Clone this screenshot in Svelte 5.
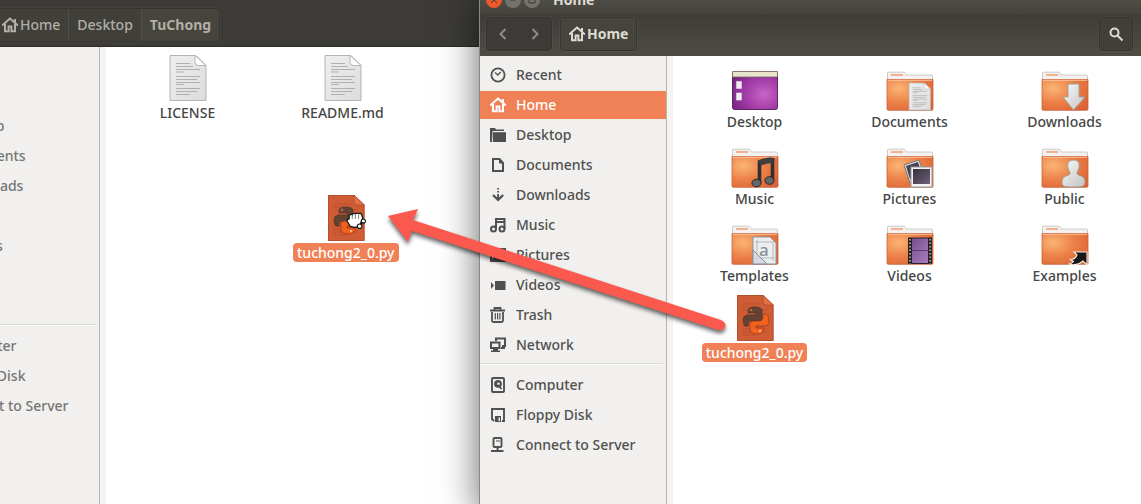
<script>
  const glyphs = {
    recent: '<circle cx="8" cy="8" r="6.6" fill="none" stroke="currentColor" stroke-width="1.8"/><path d="M5 5.5 7.8 8l3-3" fill="none" stroke="currentColor" stroke-width="1.3"/>',
    home: '<path d="M0 8.6 8 1.6l8 7M3 7v7.2h3.6V9.6h2.8v4.6H13V7" fill="none" stroke="currentColor" stroke-width="2"/><path d="M12 2h2v4h-2z" fill="currentColor"/>',
    desktop: '<path d="M0 1h5l1 1.5h8V4H2.6L2 15H0z" fill="currentColor"/><path d="M3 5.2h13V15H3z" fill="currentColor"/>',
    documents: '<path d="M3 2h6.5L13 5.8V14H3z" fill="none" stroke="currentColor" stroke-width="2"/><path d="M9 2v4.5h4" fill="currentColor"/>',
    downloads: '<path d="M7.2 1H9v1.6H7.2zM7.2 4H9v1.6H7.2zM7.2 7H9v6H7.2z" fill="currentColor"/><path d="m3 8 5.1 4.8L13.2 8" fill="none" stroke="currentColor" stroke-width="2.3"/>',
    music: '<path d="M6 12V2h8.500v10M6 5h8" fill="none" stroke="currentColor" stroke-width="2"/><circle cx="3.5" cy="12" r="2.5" fill="none" stroke="currentColor" stroke-width="2"/><circle cx="12" cy="12" r="2.5" fill="none" stroke="currentColor" stroke-width="2"/>',
    pictures: '<path d="M1 2h14v12H1z" fill="none" stroke="currentColor" stroke-width="2"/><path d="m2 12 4-5 3 3 2-2 3 4v2H2z" fill="currentColor"/>',
    videos: '<path d="M5 4h10.500v9H5zM1 5l3 3.500L1 12z" fill="currentColor"/>',
    trash: '<path d="M0 3.500h15M4.500 3V1h6v2M2 5v8.500q0 1.500 1.500 1.500h8q1.500 0 1.500-1.500V5" fill="none" stroke="currentColor" stroke-width="1.8"/><path d="M5.300 6v6.500M7.600 6v6.500M9.900 6v6.500" stroke="currentColor" stroke-width="1.2"/>',
    network: '<path d="M6 4V1.500h9V9h-3M1 5.500h8.500V11H1z" fill="none" stroke="currentColor" stroke-width="2"/><path d="M3 12h5v1.500h2V15H1v-1.500h2zM11 10h4v2h-4z" fill="currentColor"/>',
    computer: '<rect x="2" y="1" width="12" height="14" rx="1" fill="none" stroke="currentColor" stroke-width="1.9"/><circle cx="8" cy="6.8" r="3.9" fill="currentColor"/><circle cx="8.5" cy="6.8" r="1.3" fill="#f1f0ee"/><path d="m8 8 3.500 4" stroke="currentColor" stroke-width="1.8"/>',
    floppy: '<path d="M4 14 2 12V2h12v12h-2" fill="none" stroke="currentColor" stroke-width="1.9"/><path d="M5 9h6v6H5z" fill="currentColor"/><path d="M8.500 10.500H10V14H8.500z" fill="#f1f0ee"/>',
    server: '<rect x="3.5" y="1" width="8" height="9" rx="1" fill="none" stroke="currentColor" stroke-width="1.9"/><path d="M6 4h4" stroke="currentColor"/><path d="M6.600 10h2v3h4.900v2H1v-2h5.600z" fill="currentColor"/>'
  };

  const page = (x, y, s) =>
    `<g transform="translate(${x} ${y}) scale(${s})"><path d="M0 0h26l10 10v35H0z" fill="url(#paper)" stroke="#b4b4b4"/><path d="M25 0v7q0 3 3 3h8z" fill="#fff" stroke="#b4b4b4"/><path d="M6 8h14M6 11h17M6 14h24M6 16.500h8M6 21h24M6 24h21M6 27h24M6 29h8M6 33h24M6 36h21M6 39h14" stroke="#b0b0b0" stroke-width="1.2"/></g>`;

  const folder = '<path d="M1.500 17V9q0-.8.800-.8h15.700q1 0 1.300 1l.7 1.800h25.500q1 0 1 1V17z" fill="#f4f2f0" stroke="#c4beb9" stroke-width=".8"/><path d="M5 11h12" stroke="#f09a70" stroke-width="1.5"/><path d="M1 15.500h46V45q0 1.300-1.300 1.300H2.300Q1 46.300 1 45z" fill="url(#orange)" stroke="#c8623a" stroke-width=".8"/><path d="M1.800 16.300h44.400" stroke="#fac39d"/>';

  const art = {
    page: page(6, 0.5, 1),
    desktop: '<rect x="1.5" y="8" width="45" height="37.5" rx="2" fill="url(#purple)" stroke="#63246b"/><path d="M1.500 7.500h45v5.500h-45z" fill="#e9e4cc" stroke="#77655d" stroke-width=".8"/><path d="M5 17h6v8H5zM5 28.500h6v8H5z" fill="#f4eaf5" stroke="#8d5092" stroke-width=".6"/>',
    documents: folder + page(23, 19, 0.6),
    downloads: folder + '<path d="M27 20h11v13h6L32.500 46 22 33h5z" fill="url(#silver)" stroke="#a4a19e"/>',
    music: folder + '<path d="M28.500 42V21q8-3.500 13-2.500v20" fill="none" stroke="#303030" stroke-width="3.6"/><path d="M28.500 22.500q8-3.500 13-2.500" fill="none" stroke="#404040" stroke-width="5"/><ellipse cx="25.5" cy="42" rx="4.6" ry="3.8" fill="#64676a" stroke="#242424"/><ellipse cx="38.500" cy="39.500" rx="4.600" ry="3.800" fill="#64676a" stroke="#242424"/>',
    pictures: folder + '<path d="m18 24 15-5 6 17-15 6z" fill="#ddd" stroke="#777"/><path d="m20 25 12-4 4 13-12 4z" fill="#494250"/><rect x="25" y="26" width="21" height="20" fill="#f3f3f3" stroke="#999"/><rect x="27" y="28" width="17" height="15" fill="url(#photo)"/>',
    public: folder + '<path d="M32.500 19c5 0 6.500 3.500 5.500 8-.5 2.500-2 3.500-2 6 2 2 8 1.500 8 8 0 4-2 5-12 5s-11-1-11-5c0-6.500 6-6 8-8 0-2.500-1.500-3.500-2-6-1-4.500.5-8 5.500-8z" fill="url(#silver)" stroke="#9f9b98"/>',
    templates: folder + '<path d="M22 19h17l6 6v21H22z" fill="#eceef0" stroke="#8f9399"/><path d="M26 22v21M24 24h20M42 24v19M23 40h21" stroke="#b5b8bd"/><text x="28" y="38" font-family="Noto Sans, sans-serif" font-size="17" fill="#8b8f98">a</text><path d="M22 32v14h14z" fill="#d4d6df" fill-opacity=".8" stroke="#888e9c"/>',
    videos: folder + '<path d="M22 19.500h24V46H22z" fill="#272126"/><path d="M26 20.500h16V45H26z" fill="url(#film)"/><path d="M26 32.500h16" stroke="#5d3a72"/><path d="M24 21v25M44.200 21v25" stroke="#b5a6a6" stroke-width="1.8" stroke-dasharray="1.5 2"/>',
    examples: folder + '<path d="M33 34h13v13l-4-4c-4 3.500-9 4.500-14.500 3 3-.5 4-1 5-2.500l-3-2c3 0 5.500-1.500 6.500-4.500z" fill="#171717" stroke="#f1e9e2" stroke-width="1.1"/>',
    python: '<path d="M6 0h26l10.500 10v36H6z" fill="#d05c35"/><path d="M32 0v7q0 3 3 3h7.500z" fill="#e07145" stroke="#a34a2a" stroke-width=".7"/><path d="M6.500.5h25M6.500.5v45h35.500v-35" fill="none" stroke="#b4502e"/><path d="M11 9h18M11 12h16M11 15h25M11 31h25M11 34h22M11 37h25M11 40h15" stroke="#b4502e" stroke-width=".8"/><path d="M17 31h-3q-2-2-2-6t4-5h9v-2h-8v-3q1-3 7-3t7 3v8q0 3-4 3h-7q-3 0-3 5z" fill="#634232" stroke="#4a3428" stroke-width=".7"/><path d="M32 19h3q3 2 3 7t-4 5h-9v2h8v2q-1 4-7 4t-7-4v-6q0-3 4-3h6q3 0 3-4z" fill="#f2621f" stroke="#983514" stroke-width=".7"/><circle cx="20" cy="15" r="1.2" fill="#c5663f"/><circle cx="29" cy="36" r="1.2" fill="#ffb083"/>'
  };

  const devices = [['computer', 'Computer'], ['floppy', 'Floppy Disk'], ['server', 'Connect to Server']];

  const project = {
    name: 'back', title: '', path: ['Home', 'Desktop', 'TuChong'], active: '',
    places: [
      ['recent', ''], ['home', ''], ['desktop', 'Desktop'],
      ['documents', 'Documents'], ['downloads', 'Downloads'], ['music', ''],
      ['pictures', 'Pictures'], ['videos', ''], ['trash', '']
    ],
    files: [['page', 'LICENSE'], ['page', 'README.md']]
  };
  const home = {
    name: 'front', title: 'Home', path: ['Home'], active: 'home',
    places: [
      ['recent', 'Recent'], ['home', 'Home'], ['desktop', 'Desktop'],
      ['documents', 'Documents'], ['downloads', 'Downloads'], ['music', 'Music'],
      ['pictures', 'Pictures'], ['videos', 'Videos'], ['trash', 'Trash'], ['network', 'Network']
    ],
    files: [
      ['desktop', 'Desktop'], ['documents', 'Documents'], ['downloads', 'Downloads'],
      ['music', 'Music'], ['pictures', 'Pictures'], ['public', 'Public'],
      ['templates', 'Templates'], ['videos', 'Videos'], ['examples', 'Examples'],
      ['python', 'tuchong2_0.py']
    ]
  };
</script>

{#snippet glyph(name)}
  <svg class="glyph" viewBox="0 0 16 16" aria-hidden="true">{@html glyphs[name]}</svg>
{/snippet}

{#snippet file(kind, label)}
  <button class="file" class:selected={kind === 'python'}>
    <svg class="art" viewBox="0 0 48 48" aria-hidden="true">{@html art[kind]}</svg>
    <span>{label}</span>
  </button>
{/snippet}

{#snippet placeList(items, active)}
  <ul>
    {#each items as [icon, label]}
      <li><a href="#{icon}" class:current={icon === active}>{@render glyph(icon)}<span>{label}</span></a></li>
    {/each}
  </ul>
{/snippet}

{#snippet fileWindow(win)}
  <section class="window {win.name}">
    <header class="titlebar">
      <button class="dot close" aria-label="Close"><svg viewBox="0 0 16 16"><path d="m5 5 6 6m0-6-6 6" /></svg></button>
      <button class="dot" aria-label="Minimize"><svg viewBox="0 0 16 16"><path d="M5 8h6" /></svg></button>
      <button class="dot" aria-label="Maximize"><svg viewBox="0 0 16 16"><path d="M5 5h6v6H5z" /></svg></button>
      {#if win.title}<h1>{win.title}</h1>{/if}
    </header>
    <div class="toolbar">
      <div class="group history">
        <button aria-label="Back"><svg class="glyph" viewBox="0 0 16 16"><path d="M10.500 3 5.500 8l5 5" /></svg></button>
        <button aria-label="Forward"><svg class="glyph" viewBox="0 0 16 16"><path d="m5.500 3 5 5-5 5" /></svg></button>
      </div>
      <nav class="group path" aria-label="Path">
        {#each win.path as part, i}
          <button class:here={i === win.path.length - 1}>
            {#if part === 'Home'}{@render glyph('home')}{/if}<span>{part}</span>
          </button>
        {/each}
      </nav>
      <div class="group search">
        <button aria-label="Search"><svg class="glyph" viewBox="0 0 16 16"><circle cx="6.5" cy="6.5" r="4" /><path d="m9.500 9.500 5 5" /></svg></button>
      </div>
    </div>
    <div class="body">
      <aside>
        {@render placeList(win.places, win.active)}
        <hr />
        {@render placeList(devices, win.active)}
      </aside>
      <main>
        {#each win.files as [kind, label]}
          {@render file(kind, label)}
        {/each}
      </main>
    </div>
  </section>
{/snippet}

<div class="screen">
  <svg class="defs" aria-hidden="true">
    <defs>
      <linearGradient id="paper" x1="0" y1="0" x2="1" y2="1"><stop offset="0" stop-color="#efefef" /><stop offset="1" stop-color="#dcdcdc" /></linearGradient>
      <radialGradient id="orange" cx=".25" cy=".3" r=".9"><stop offset="0" stop-color="#fbb475" /><stop offset=".5" stop-color="#ec8148" /><stop offset="1" stop-color="#db6234" /></radialGradient>
      <radialGradient id="purple" cx=".7" cy=".6" r=".8"><stop offset="0" stop-color="#c964c6" /><stop offset=".6" stop-color="#9c36a2" /><stop offset="1" stop-color="#74247e" /></radialGradient>
      <linearGradient id="silver" x1="0" y1="0" x2="1" y2="1"><stop offset="0" stop-color="#fafafa" /><stop offset="1" stop-color="#c4c2c1" /></linearGradient>
      <linearGradient id="photo" x1="0" y1="0" x2="1" y2="1"><stop offset="0" stop-color="#36333e" /><stop offset="1" stop-color="#6d5f76" /></linearGradient>
      <linearGradient id="film" x1="0" y1="0" x2="1" y2="1"><stop offset="0" stop-color="#74508f" /><stop offset="1" stop-color="#aa7dbd" /></linearGradient>
    </defs>
  </svg>

  {@render fileWindow(project)}

  <div class="dragged">
    {@render file('python', 'tuchong2_0.py')}
    <svg class="hand" viewBox="0 0 20 18" aria-hidden="true">
      <path d="M4 14 1 9q0-2 2-2V4q1-2 3-1 1-2 3-1 2-1 3 0 2-1 3 1l1 4-3 6q-2 2-5 2z" fill="#fff" stroke="#111" stroke-width="1.2" />
      <path d="M6 3v4M9 2v5M12 3v4" stroke="#555" stroke-width=".7" />
      <circle cx="16.5" cy="9" r="2" fill="#fff" stroke="#111" />
      <circle cx="13" cy="14" r="2.2" fill="#fff" stroke="#111" />
      <path d="m14 12 2-2" stroke="#111" />
    </svg>
  </div>

  {@render fileWindow(home)}

  <svg class="arrow" viewBox="0 0 350 130" aria-hidden="true">
    <path d="M4 11 34 4l-5 11L337 115q6 3 4 7-2 4-7 3L28 26l-4 11z" />
  </svg>
</div>

<style>
  :global(body) { margin: 0; background: #fff; }

  .screen {
    position: relative;
    min-height: 100vh;
    overflow: hidden;
    font: 500 14px/18px "Noto Sans", sans-serif;
    color: #454545;
  }
  .defs { position: absolute; width: 0; height: 0; }
  button { font: inherit; color: inherit; border: 0; padding: 0; background: none; }
  .glyph { width: 16px; height: 16px; flex: none; }

  .window {
    position: absolute;
    bottom: 0;
    display: flex;
    flex-direction: column;
    box-sizing: border-box;
    border-left: 1px solid #8b8985;
    background: #fff;
  }
  .back { left: -88px; top: -23px; right: 480px; }
  .front { left: 479px; top: -14px; right: 0; box-shadow: 0 12px 36px rgba(0, 0, 0, .6); }

  .titlebar {
    display: flex;
    align-items: center;
    gap: 3px;
    height: 28px;
    padding: 0 6px;
    background: linear-gradient(#55534b, #45443e);
    color: #dfdbd2;
  }
  .dot { width: 16px; height: 16px; border-radius: 50%; background: #74726b; }
  .dot.close { background: #ed592b; }
  .dot svg { display: block; fill: none; stroke: #3c3b37; stroke-width: 1; }
  h1 { margin: 0 0 0 10px; font-size: 14px; line-height: 18px; font-weight: 700; }

  .toolbar {
    display: flex;
    align-items: center;
    gap: 8px;
    height: 42px;
    box-sizing: border-box;
    padding: 0 8px 2px 6px;
    background: linear-gradient(#3e3d38, #4d4c44);
    color: #dfdbd2;
  }
  .back .titlebar, .back .toolbar { background: #3c3b37; color: #b3afa6; }
  .back .toolbar { border-bottom: 1px solid #2c2b28; }

  .group {
    display: flex;
    box-sizing: border-box;
    height: 34px;
    border: 1px solid #35342f;
    border-radius: 4px;
    background: #403f3a;
    box-shadow: 0 0 0 1px rgba(255, 255, 255, .04);
    overflow: hidden;
  }
  .group button { display: flex; align-items: center; justify-content: center; }
  .history { background: #3c3b37; }
  .history button { width: 32px; }
  .history svg, .search svg { fill: none; stroke: #8f8c84; stroke-width: 2; }
  .search { margin-left: auto; }
  .search button { width: 32px; }
  .search svg { stroke: #dfdbd2; stroke-width: 2; }
  .path button { gap: 2px; padding: 0 8px; }
  .path .here { font-weight: 700; background: #45443d; }
  .path button + button { border-left: 1px solid #504f49; }

  .body { display: flex; flex: 1; }
  aside {
    box-sizing: border-box;
    flex: none;
    width: 187px;
    padding-top: 4px;
    border-right: 1px solid #b9b6b2;
    background: #f1f0ee;
    color: #505050;
  }
  .back aside { color: #757575; }
  ul { list-style: none; margin: 0; padding: 0; }
  li { display: flow-root; }
  li a {
    display: flex;
    align-items: center;
    gap: 10px;
    box-sizing: border-box;
    height: 28px;
    margin: 1px 0;
    padding-left: 10px;
    color: inherit;
    text-decoration: none;
    white-space: nowrap;
  }
  li .current { background: #f08156; color: #fff; }
  hr { margin: 3px 3px 5px 0; border: 0; border-top: 1px solid #dedcd9; border-bottom: 1px solid #fafafa; }

  main {
    flex: 1;
    min-width: 0;
    display: grid;
    grid-template-columns: repeat(auto-fill, 155px);
    align-content: start;
    row-gap: 10px;
    padding: 8px 0 0 4px;
    border-left: 6px solid #f5f4f3;
  }
  .front main { grid-template-columns: repeat(3, 155px); }
  .file { display: flex; flex-direction: column; align-items: center; height: 67px; }
  .art { display: block; width: 48px; height: 48px; flex: none; }
  .file span { padding: 0 4px; border-radius: 4px; line-height: 19px; }
  .selected span { background: #f08156; color: #fff; }

  .dragged { position: absolute; left: 293px; top: 195px; }
  .hand { position: absolute; left: 53px; top: 16px; width: 21px; height: 20px; }
  .arrow {
    position: absolute;
    left: 384px;
    top: 205px;
    width: 350px;
    height: 130px;
    overflow: visible;
    pointer-events: none;
    filter: drop-shadow(0 3px 2px rgba(0, 0, 0, .6));
  }
  .arrow path { fill: #fb584e; }
</style>
